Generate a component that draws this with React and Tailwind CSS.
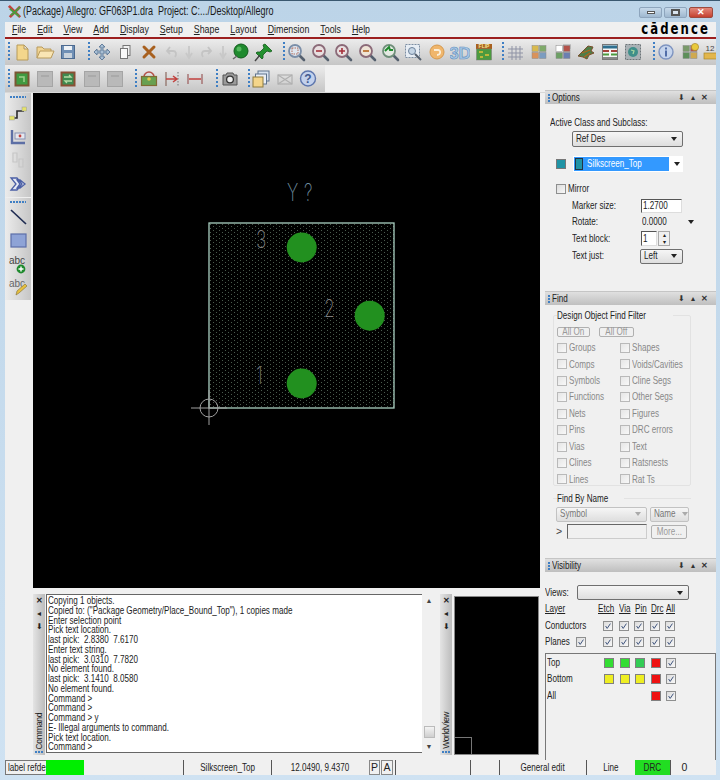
const font = { fontFamily: '"Liberation Sans", Arial, sans-serif' }

// the screenshot is squeezed sideways, so labels get narrowed the same way
function T({ children, center = false, className = '' }) {
  return (
    <span className={`inline-block whitespace-nowrap scale-x-[0.77] ${center ? 'origin-center' : 'origin-left'} ${className}`}>
      {children}
    </span>
  )
}

const Mag = ({ fill = '#e8dfe0', ring = '#8c7c86', children }) => (
  <>
    <path d="M13 13l5 5" stroke="#55606e" strokeWidth="2.6" strokeLinecap="round" />
    <circle cx="9" cy="9" r="6" fill={fill} stroke={ring} strokeWidth="1.8" />
    {children}
  </>
)

const Tiles = ({ colors }) => (
  <>
    {colors.map((c, i) => (
      <rect key={i} x={3 + (i % 2) * 7.5} y={3.5 + Math.floor(i / 2) * 7} width="6.5" height="6" fill={c} stroke="#8a8a8a" strokeWidth="0.5" />
    ))}
  </>
)

const icons = {
  file: <path d="M5 3h7l4 4v11H5z M12 3v4h4" fill="#f3d68c" stroke="#b79a58" />,
  open: (
    <>
      <path d="M2 16V5h5l2 2h7v3" fill="#f1d493" stroke="#b89a5c" />
      <path d="M2 16l3-7h14l-3 7z" fill="#f9e5b4" stroke="#b89a5c" />
    </>
  ),
  save: (
    <>
      <rect x="3.5" y="3.5" width="13" height="13" fill="#6f8fb5" stroke="#4c6a90" />
      <rect x="6" y="4" width="8" height="4" fill="#eef2f6" />
      <rect x="6" y="11" width="8" height="5" fill="#c8d2dc" />
    </>
  ),
  move: <path d="M10 2l3 3h-2v4h4V7l3 3-3 3v-2h-4v4h2l-3 3-3-3h2v-4H5v2l-3-3 3-3v2h4V5H7z" fill="#a9bfd4" stroke="#5a7696" strokeWidth="0.9" />,
  copy: (
    <>
      <rect x="8" y="3.5" width="7" height="10" fill="#f1f1f1" stroke="#777" />
      <rect x="5.5" y="6.5" width="7" height="10" fill="#fafafa" stroke="#777" />
    </>
  ),
  del: <path d="M5 5l10 10M15 5L5 15" stroke="#a8601f" strokeWidth="3" strokeLinecap="round" />,
  undo: <path d="M8 5L5 9l3 3M5 9h6c3 0 4 3 2 6" fill="none" stroke="#c4c4c4" strokeWidth="1.8" />,
  redo: <path d="M12 5l3 4-3 3M15 9H9c-3 0-4 3-2 6" fill="none" stroke="#c4c4c4" strokeWidth="1.8" />,
  down: <path d="M10 4v10M7 11l3 5 3-5" fill="none" stroke="#c8c8c8" strokeWidth="1.8" />,
  ball: (
    <>
      <circle cx="11" cy="9" r="7" fill="#1f8a2e" stroke="#125c1c" />
      <path d="M3 17l4-3" stroke="#666" strokeWidth="1.5" />
      <circle cx="9" cy="7" r="2.5" fill="#56b85e" />
    </>
  ),
  pin: (
    <>
      <path d="M12 2l7 7-2 1-3-1-4 4 0 3-1 1-6-6 1-1 3 0 4-4-1-3z" fill="#23912f" stroke="#135c1b" strokeWidth="0.8" />
      <path d="M7 13l-5 6" stroke="#444" strokeWidth="1.4" />
    </>
  ),
  zoomArea: <Mag fill="#dfe6ef" ring="#7b8ea8"><rect x="6" y="6" width="6" height="6" fill="none" stroke="#b06f5e" strokeDasharray="1.5 1" /></Mag>,
  zoomOut: <Mag ring="#8b6a78"><path d="M6 9h6" stroke="#a5303a" strokeWidth="1.6" /></Mag>,
  zoomIn: <Mag ring="#8b6a78"><path d="M6 9h6M9 6v6" stroke="#a5303a" strokeWidth="1.6" /></Mag>,
  zoomMinus: <Mag fill="#efe4d6" ring="#8b6a78"><path d="M6 9h6" stroke="#b5651d" strokeWidth="1.6" /></Mag>,
  zoomBack: <Mag fill="#e5eae3" ring="#6f8f7a"><path d="M5 9l4-4 1 3 3 0" fill="none" stroke="#1f8a2e" strokeWidth="2" /></Mag>,
  zoomFit: (
    <>
      <rect x="2.5" y="2.5" width="14" height="13" fill="#e7edf4" stroke="#7d8ea3" strokeDasharray="2 1" />
      <circle cx="9" cy="9" r="3.5" fill="#c5d5e5" stroke="#6d829b" />
      <path d="M12 12l6 6" stroke="#55606e" strokeWidth="2" />
    </>
  ),
  refresh: (
    <>
      <circle cx="10" cy="10" r="7" fill="#f0b66c" stroke="#d5994f" />
      <path d="M7 8h4c3 0 3 5-1 5" fill="none" stroke="#fbeed8" strokeWidth="1.8" />
    </>
  ),
  three: (
    <text x="10" y="16.5" textAnchor="middle" fontSize="17" fontWeight="700" fill="#a9c8e6" stroke="#5e8ebd" strokeWidth="0.6" style={font}>3D</text>
  ),
  flip: (
    <>
      <rect x="2" y="2" width="16" height="5" fill="#a8601f" />
      <text x="10" y="6.4" textAnchor="middle" fontSize="5" fontWeight="700" fill="#f6e39a" style={font}>FLIP</text>
      <rect x="2.5" y="7" width="15" height="11" fill="#4c9a3f" stroke="#777" strokeWidth="0.5" />
      <path d="M5 10h4M11 13h4M6 15h3" stroke="#e2c23c" strokeWidth="1.4" />
    </>
  ),
  grid: <path d="M6 4v14M10 4v14M14 4v14M2 7h15M2 11h15M2 15h15" stroke="#8f93a5" strokeWidth="1" />,
  colors: <Tiles colors={['#d8b94e', '#7faa6a', '#d9925a', '#7b9cc0']} />,
  layers: (
    <>
      <rect x="10" y="2" width="8" height="5" fill="#c4c4c4" />
      <rect x="10" y="8" width="8" height="4" fill="#d4d4d4" />
      <Tiles colors={['#fff', '#b5524a', '#6c9f64', '#6b7fb0']} />
    </>
  ),
  dragon: (
    <>
      <path d="M2 14l6-6 4-4 5 1-2 4 3 2-5 2-2 4-4-2z" fill="#4f7d48" stroke="#7a4f2c" />
      <path d="M6 11l8-3M8 15l6-4" stroke="#b5651d" strokeWidth="1.1" />
    </>
  ),
  ecset: (
    <>
      <rect x="2.5" y="2.5" width="15" height="15" fill="#f4f4f4" stroke="#777" />
      <path d="M3 5h14" stroke="#2e6f8f" strokeWidth="3" />
      <path d="M3 9h6M11 9h6" stroke="#a5403a" strokeWidth="2" />
      <path d="M3 12.5h6M11 12.5h6" stroke="#4c9a3f" strokeWidth="2" />
      <path d="M3 16h14" stroke="#888" strokeWidth="2" />
    </>
  ),
  globe: (
    <>
      <rect x="2.5" y="2.5" width="15" height="15" fill="#a9b1b5" stroke="#6d7478" strokeDasharray="2 1" />
      <circle cx="10" cy="10" r="5" fill="#3f8f8a" />
      <path d="M8 8l3 1-1 3" stroke="#a8d6a0" strokeWidth="1.3" fill="none" />
    </>
  ),
  info: (
    <>
      <circle cx="10" cy="10" r="7" fill="#c5d4ec" stroke="#7e94c0" strokeWidth="1.4" />
      <rect x="9" y="8.5" width="2" height="6" fill="#516da8" />
      <rect x="9" y="5.5" width="2" height="2" fill="#516da8" />
    </>
  ),
  status: (
    <>
      <Tiles colors={['#7a9a6a', '#b5524a', '#5d8f5a', '#d0a94f']} />
      <circle cx="15" cy="5" r="3.6" fill="#e9c93b" stroke="#a9882a" strokeWidth="0.7" />
    </>
  ),
  twelve: (
    <>
      <text x="9" y="8.5" textAnchor="middle" fontSize="8" fill="#444" style={font}>12</text>
      <rect x="3" y="11" width="14" height="6" fill="#e2b64c" stroke="#a9882a" strokeWidth="0.7" />
    </>
  ),
  brdOne: (
    <>
      <rect x="2.5" y="2.5" width="15" height="15" fill="#7a5632" />
      <rect x="4.5" y="4.5" width="11" height="11" fill="#3f9a40" />
      <path d="M7 8h5v5" fill="none" stroke="#9fd08a" strokeWidth="1.5" />
    </>
  ),
  brdTwo: (
    <>
      <rect x="2.5" y="2.5" width="15" height="15" fill="#8a4f34" />
      <rect x="4.5" y="4.5" width="11" height="11" fill="#3f8a50" />
      <path d="M6 8h7l-2-2M14 12H7l2 2" fill="none" stroke="#b7dca5" strokeWidth="1.3" />
    </>
  ),
  brdOff: (
    <>
      <rect x="2.5" y="2.5" width="15" height="15" fill="#b9b9b9" stroke="#a5a5a5" />
      <path d="M6 7h8" stroke="#9b9b9b" />
    </>
  ),
  place: (
    <>
      <path d="M5 8a5 5 0 0 1 10 0" fill="none" stroke="#b5524a" strokeWidth="1.6" />
      <rect x="2.5" y="7.5" width="15" height="9" fill="#68a050" stroke="#806c32" strokeWidth="1.2" />
      <circle cx="10" cy="10" r="1.8" fill="#e5c94f" />
    </>
  ),
  dimOne: (
    <>
      <path d="M4 3v14" stroke="#8b6a60" strokeWidth="1.2" />
      <path d="M16 3v14" stroke="#777" strokeDasharray="1.5 1.5" />
      <path d="M4 10h10M11 7l4 3-4 3" fill="none" stroke="#c2413e" strokeWidth="1.5" />
    </>
  ),
  dimTwo: (
    <>
      <path d="M3 5v10M17 5v10" stroke="#9b5b5b" strokeWidth="1.2" />
      <path d="M4 10h12" stroke="#c2413e" strokeWidth="1.5" />
    </>
  ),
  camera: (
    <>
      <path d="M3 6h3l1-2h6l1 2h3v10H3z" fill="#9a9a9a" stroke="#555" />
      <circle cx="10" cy="10.5" r="3.4" fill="#f0f0f0" stroke="#333" strokeWidth="1.3" />
    </>
  ),
  stack: (
    <>
      <rect x="7" y="2" width="11" height="10" fill="#d7e2ef" stroke="#60748e" />
      <rect x="4.5" y="5" width="11" height="10" fill="#eaeff5" stroke="#60748e" />
      <rect x="2" y="8" width="10" height="10" fill="#f4d58a" stroke="#8e7b3e" />
    </>
  ),
  mail: (
    <>
      <path d="M3 6l14 9M17 6L3 15" stroke="#b0b0b0" strokeWidth="1.2" />
      <rect x="3" y="6" width="14" height="9" fill="none" stroke="#b0b0b0" strokeWidth="1.2" />
    </>
  ),
  help: (
    <>
      <circle cx="10" cy="9.5" r="7.5" fill="#c3d1ec" stroke="#5e76ad" strokeWidth="1.4" />
      <text x="10" y="14" textAnchor="middle" fontSize="12" fontWeight="700" fill="#41598f" style={font}>?</text>
    </>
  ),
  route: (
    <>
      <path d="M4 15h5V8h7" fill="none" stroke="#2b2b2b" strokeWidth="1.6" />
      <rect x="1.5" y="13" width="5" height="4" fill="#e4e26a" stroke="#999" strokeWidth="0.5" />
      <rect x="14" y="4" width="4.5" height="4" fill="#e4e26a" stroke="#999" strokeWidth="0.5" />
    </>
  ),
  sect: (
    <>
      <path d="M4 3v13h13" fill="none" stroke="#5d6fa5" strokeWidth="2.4" />
      <rect x="7" y="6" width="10" height="6" fill="#e5e7ee" stroke="#8791b3" />
      <circle cx="12" cy="9" r="1.4" fill="#c2413e" />
    </>
  ),
  ghost: <path d="M5 3h4v9H5zM11 9h4v8h-4z" fill="none" stroke="#c6c6c6" strokeWidth="1.2" />,
  fan: <path d="M3 4h6l5 6-5 6H3l5-6z M9 6h3l5 4-5 4H9l3-4z" fill="#e6e9f4" stroke="#4b5fa5" strokeWidth="1.3" />,
  line: <path d="M3 3l15 14" stroke="#1f2c52" strokeWidth="1.7" />,
  shape: <rect x="3" y="4" width="15" height="13" fill="#8ea3d6" stroke="#5c6fa8" strokeWidth="1.2" />,
  abcAdd: (
    <>
      <text x="1" y="10" fontSize="10" fill="#444" style={font}>abc</text>
      <circle cx="13" cy="15" r="4.4" fill="#1f8a2e" />
      <path d="M10.5 15h5M13 12.5v5" stroke="#fff" strokeWidth="1.4" />
    </>
  ),
  abcEdit: (
    <>
      <text x="1" y="10" fontSize="10" fill="#666" style={font}>abc</text>
      <path d="M8 18l1-4 8-7 2 2-8 7z" fill="#e7c03e" stroke="#8e7b3e" strokeWidth="0.7" />
    </>
  ),
}

function Icon({ name }) {
  return (
    <svg viewBox="0 0 20 20" className="h-[20px] w-[20px] shrink-0">
      {icons[name]}
    </svg>
  )
}

function VHandle() {
  return <div className="ml-[3px] h-[20px] w-[2px] shrink-0 bg-[repeating-linear-gradient(#3f7fc4_0_2px,transparent_2px_4px)]" />
}

function ToolGroup({ names, w = 'w-[23.4px]' }) {
  return (
    <div className="flex items-center">
      {names.map((n, i) => (
        <div key={i} className={`flex ${w} shrink-0 justify-center`}>
          <Icon name={n} />
        </div>
      ))}
    </div>
  )
}

function PanelHeader({ title }) {
  return (
    <div className="flex h-[14px] items-center border-t border-[#c5c5c5] bg-gradient-to-b from-[#e0e0e0] to-[#bfbfbf] pl-[3px] pr-[8px] text-[#222]">
      <span className="mr-[2px] h-[8px] w-[2px] bg-[repeating-linear-gradient(#3f7fc4_0_2px,transparent_2px_3px)]" />
      <T>{title}</T>
      <span className="ml-auto flex items-center gap-[6px] text-[8px] leading-none text-[#333]">
        <span>⬇</span>
        <span>▴</span>
        <span className="font-bold">✕</span>
      </span>
    </div>
  )
}

function Combo({ className = '', label = '', disabled = false }) {
  return (
    <div
      className={`flex items-center justify-between overflow-hidden rounded-[2px] border bg-gradient-to-b from-[#f6f6f6] to-[#dedede] pl-[3px] pr-[5px] ${
        disabled ? 'border-[#c2c2c2] text-[#777]' : 'border-[#6f6f6f] text-[#222]'
      } ${className}`}
    >
      <T>{label}</T>
      <span className={`h-0 w-0 shrink-0 border-x-[3.5px] border-t-[4px] border-x-transparent ${disabled ? 'border-t-[#aaa]' : 'border-t-[#222]'}`} />
    </div>
  )
}

function Check({ on = false, dim = false }) {
  return (
    <span
      className={`flex h-[10px] w-[10px] shrink-0 items-center justify-center border bg-gradient-to-br ${
        dim ? 'border-[#b9b9b9] from-[#e6e6e6] to-[#f8f8f8]' : 'border-[#8e8f8f] from-[#dcdcdc] to-[#f8f8f8]'
      }`}
    >
      {on && (
        <svg viewBox="0 0 10 10" className="h-[8px] w-[8px]">
          <path d="M2 5l2 3 4-6" fill="none" stroke="#3a4f7a" strokeWidth="1.2" />
        </svg>
      )}
    </span>
  )
}

function Swatch({ color }) {
  return <span className="h-[10px] w-[10px] shrink-0 border border-[#808080]" style={{ backgroundColor: color }} />
}

function OptionsPanel() {
  return (
    <section className="h-[197px] shrink-0 overflow-hidden">
      <PanelHeader title="Options" />
      <div className="px-[5px]">
        <p className="mt-[12px] h-[12px] leading-[12px]"><T>Active Class and Subclass:</T></p>
        <Combo label="Ref Des" className="ml-[22px] mt-[3px] h-[16px] w-[111px]" />
        <div className="mt-[9px] flex items-center">
          <span className="ml-[6px] h-[10px] w-[10px] border border-[#777] bg-[#1f93a5]" />
          <div className="ml-[7px] flex h-[16px] w-[110px] items-center bg-white p-[1px]">
            <div className="flex h-[14px] w-[95px] items-center bg-[#3399ff] text-white">
              <span className="ml-[1px] mr-[4px] h-[12px] w-[8px] border border-[#234] bg-[#1f93a5]" />
              <T>Silkscreen_Top</T>
            </div>
            <span className="ml-[5px] h-0 w-0 border-x-[3.5px] border-t-[4px] border-x-transparent border-t-[#222]" />
          </div>
        </div>
        <div className="mt-[9px] flex items-center gap-[2px] pl-[6px]">
          <Check />
          <T>Mirror</T>
        </div>
        <div className="mt-[2px] flex h-[14px] items-center pl-[22px]">
          <span className="w-[69px]"><T>Marker size:</T></span>
          <span className="flex h-[14px] w-[41px] items-center border border-[#ddd] border-l-[#555] border-t-[#555] bg-white pl-[1px]"><T>1.2700</T></span>
        </div>
        <div className="mt-[2px] flex h-[14px] items-center pl-[22px]">
          <span className="w-[69px]"><T>Rotate:</T></span>
          <span className="flex w-[54px] items-center justify-between pl-[1px] pr-[1px]">
            <T>0.0000</T>
            <span className="h-0 w-0 border-x-[3.5px] border-t-[4px] border-x-transparent border-t-[#222]" />
          </span>
        </div>
        <div className="mt-[2px] flex h-[16px] items-center pl-[22px]">
          <span className="w-[69px]"><T>Text block:</T></span>
          <span className="flex h-[15px] w-[16px] items-center border border-[#ddd] border-l-[#555] border-t-[#555] bg-white pl-[1px]"><T>1</T></span>
          <span className="ml-[1px] flex h-[15px] w-[12px] flex-col border border-[#aaa] text-center text-[6px] leading-[6.5px]">
            <span>▴</span>
            <span>▾</span>
          </span>
        </div>
        <div className="mt-[2px] flex h-[15px] items-center pl-[22px]">
          <span className="w-[68px]"><T>Text just:</T></span>
          <Combo label="Left" className="h-[15px] w-[43px]" />
        </div>
      </div>
    </section>
  )
}

const findItems = [
  ['Groups', 'Shapes'],
  ['Comps', 'Voids/Cavities'],
  ['Symbols', 'Cline Segs'],
  ['Functions', 'Other Segs'],
  ['Nets', 'Figures'],
  ['Pins', 'DRC errors'],
  ['Vias', 'Text'],
  ['Clines', 'Ratsnests'],
  ['Lines', 'Rat Ts'],
]

function FindPanel() {
  return (
    <section className="mt-[4px] h-[263px] shrink-0">
      <PanelHeader title="Find" />
      <fieldset className="mx-[8px] mt-[3px] h-[178px] w-[138px] min-w-0 rounded-[2px] border border-[#e2e2e2] pl-[3px] pt-[3px]">
        <legend className="ml-0 text-[#222]"><T>Design Object Find Filter</T></legend>
        <div className="flex gap-[9px]">
          <span className="flex h-[10px] w-[33px] items-center justify-center rounded-[2px] border border-[#b0b0b0] text-[#999]"><T center>All On</T></span>
          <span className="flex h-[10px] w-[35px] items-center justify-center rounded-[2px] border border-[#b0b0b0] text-[#999]"><T center>All Off</T></span>
        </div>
        <div className="mt-[3px] grid grid-cols-[63px_1fr] text-[#888]">
          {findItems.flat().map((label) => (
            <div key={label} className="flex h-[16.45px] items-center gap-[2px]">
              <Check dim />
              <T>{label}</T>
            </div>
          ))}
        </div>
      </fieldset>
      <fieldset className="mx-[8px] mt-[5px] h-[47px] w-[138px] min-w-0 border-t border-[#e2e2e2]">
        <legend className="ml-[4px] text-[#222]"><T>Find By Name</T></legend>
        <div className="ml-[3px] flex gap-[3px]">
          <Combo label="Symbol" disabled className="h-[15px] w-[91px]" />
          <Combo label="Name" disabled className="h-[15px] w-[39px]" />
        </div>
        <div className="ml-[3px] mt-[2px] flex items-center text-[#444]">
          <span className="w-[11px]">&gt;</span>
          <span className="h-[15px] w-[80px] border border-[#ccc] border-l-[#666] border-t-[#666] bg-[#f0f0f0]" />
          <span className="ml-[4px] flex h-[14px] w-[36px] items-center justify-center rounded-[2px] border border-[#b0b0b0] text-[#999]"><T center>More...</T></span>
        </div>
      </fieldset>
    </section>
  )
}

const layerRows = [
  { name: 'Top', colors: ['#33dd33', '#33dd33', '#33cc55', '#ee1111'] },
  { name: 'Bottom', colors: ['#eeee22', '#eeee22', '#eeee22', '#ee1111'] },
  { name: 'All', colors: [null, null, null, '#ee1111'] },
]

const colsClass = 'grid grid-cols-[10px_10px_10px_10px_10px] gap-x-[5.6px]'

function VisibilityPanel() {
  return (
    <section className="mt-[4px] flex min-h-0 flex-1 flex-col">
      <PanelHeader title="Visibility" />
      <div className="flex items-center pt-[13px]">
        <span className="w-[32px]"><T>Views:</T></span>
        <Combo className="h-[15px] w-[112px]" />
      </div>
      <div className="mt-[2px] flex h-[12px] items-center">
        <span className="w-[53px]"><T className="underline">Layer</T></span>
        <span className="w-[21px]"><T className="underline">Etch</T></span>
        <span className="w-[16px]"><T className="underline">Via</T></span>
        <span className="w-[16px]"><T className="underline">Pin</T></span>
        <span className="w-[15px]"><T className="underline">Drc</T></span>
        <T className="underline">All</T>
      </div>
      <div className="mt-[5px] flex h-[12px] items-center">
        <span className="w-[58px]"><T>Conductors</T></span>
        <div className={colsClass}>
          {[0, 1, 2, 3, 4].map((i) => <Check key={i} on />)}
        </div>
      </div>
      <div className="mt-[4px] flex h-[12px] items-center">
        <span className="w-[31px]"><T>Planes</T></span>
        <Check on />
        <div className={`ml-[17px] ${colsClass}`}>
          {[0, 1, 2, 3, 4].map((i) => <Check key={i} on />)}
        </div>
      </div>
      <div className="mt-[5px] min-h-0 flex-1 border-x border-t border-[#777] pl-[1px] pt-[3px]">
        {layerRows.map((row) => (
          <div key={row.name} className="mb-[4.5px] flex h-[12px] items-center">
            <span className="w-[57px]"><T>{row.name}</T></span>
            <div className={colsClass}>
              {row.colors.map((c, i) => (c ? <Swatch key={i} color={c} /> : <span key={i} />))}
              <Check on />
            </div>
          </div>
        ))}
      </div>
    </section>
  )
}

function Canvas() {
  return (
    <svg viewBox="33 93 507 495" className="h-[495px] w-[507px] shrink-0 bg-black">
      <defs>
        <pattern id="dots" x="209" y="223" width="6" height="4" patternUnits="userSpaceOnUse">
          <rect x="1" y="1" width="1" height="1" fill="#4a5a4d" />
          <rect x="4" y="3" width="1" height="1" fill="#4a5a4d" />
        </pattern>
      </defs>
      <rect x="209" y="223" width="185" height="185" fill="url(#dots)" stroke="#a9cfc0" strokeWidth="1.3" />
      <g fontSize="24" fill="#6d8a9c" fontWeight="200" style={{ fontFamily: 'Inter, sans-serif' }}>
        <text transform="translate(287 201) scale(0.72 1)">Y</text>
        <text transform="translate(304 201) scale(0.72 1)">?</text>
      </g>
      <g fontSize="24" fill="#7d7d7d" fontWeight="200" style={{ fontFamily: 'Inter, sans-serif' }}>
        <text transform="translate(256 248) scale(0.72 1)">3</text>
        <text transform="translate(324 317) scale(0.72 1)">2</text>
        <text transform="translate(256 384) scale(0.72 1)">1</text>
      </g>
      <circle cx="301.7" cy="247.5" r="15" fill="#22901f" />
      <circle cx="369.7" cy="315.7" r="15" fill="#22901f" />
      <circle cx="301.7" cy="383.5" r="15" fill="#22901f" />
      <circle cx="209" cy="408" r="9" fill="none" stroke="#a0a0a0" />
      <path d="M191 408h36M209 390v35" stroke="#a0a0a0" />
    </svg>
  )
}

function TabStrip({ label }) {
  return (
    <div className="flex h-[161px] w-[12px] shrink-0 flex-col items-center justify-between bg-gradient-to-r from-[#e4e4e4] to-[#bcbcbc] py-[2px] leading-none text-[#222]">
      <div className="flex flex-col items-center gap-[5px] pt-[1px] text-[8px]">
        <span className="font-bold">✕</span>
        <span>◂</span>
        <span>⬇</span>
      </div>
      <div className="flex flex-col items-center gap-[2px]">
        <span className="rotate-180 text-[8.5px] tracking-[-0.4px] [writing-mode:vertical-rl]">{label}</span>
        <span className="h-[2px] w-[8px] bg-[repeating-linear-gradient(90deg,#3f7fc4_0_2px,transparent_2px_3px)]" />
      </div>
    </div>
  )
}

const commandLines = [
  'Copying 1 objects.',
  'Copied to: ("Package Geometry/Place_Bound_Top"), 1 copies made',
  'Enter selection point',
  'Pick text location.',
  'last pick:  2.8380  7.6170',
  'Enter text string.',
  'last pick:  3.0310  7.7820',
  'No element found.',
  'last pick:  3.1410  8.0580',
  'No element found.',
  'Command >',
  'Command >',
  'Command > y',
  'E- Illegal arguments to command.',
  'Pick text location.',
  'Command >',
]

function CommandPanel() {
  return (
    <div className="mt-[6px] flex h-[162px] items-stretch">
      <TabStrip label="Command" />
      <div className="ml-[1px] h-[159px] w-[376px] overflow-hidden border-y border-l border-[#666] bg-white pl-[1px] pt-[1px] leading-[9.75px] text-[#222]">
        {commandLines.map((l, i) => (
          <div key={i} className="whitespace-pre"><T className="whitespace-pre">{l}</T></div>
        ))}
      </div>
      <div className="flex h-[159px] w-[14px] flex-col items-center justify-between bg-[#f0f0f0] py-[3px] text-[7px] leading-none text-[#444]">
        <span>▲</span>
        <div className="flex flex-col items-center gap-[5px]">
          <span className="h-[12px] w-[11px] border border-[#bbb] bg-gradient-to-b from-[#f4f4f4] to-[#cfcfcf]" />
          <span>▼</span>
        </div>
      </div>
      <div className="w-[4px]" />
      <TabStrip label="WorldView" />
      <div className="ml-[2px] mt-[2px] flex h-[159px] w-[85px] items-end border border-[#888] bg-black">
        <span className="h-[17px] w-[17px] border-r border-t border-[#777]" />
      </div>
    </div>
  )
}

const statusCell = 'flex h-[15px] shrink-0 items-center border-l border-[#555]'

function StatusBar() {
  return (
    <footer className="flex h-[15px] items-center bg-[#f0f0f0] leading-none text-[#222]">
      <span className={`${statusCell} w-[41px] border-y border-[#777] pl-[2px]`}><T>label refde</T></span>
      <span className="h-[15px] w-[38px] shrink-0 bg-[#00ee00]" />
      <span className={`${statusCell} w-[100px] border-l-0 border-r`} />
      <span className={`${statusCell} w-[88px] justify-center border-l-0 border-r`}><T center>Silkscreen_Top</T></span>
      <span className={`${statusCell} w-[96px] justify-center border-l-0`}><T center>12.0490, 9.4370</T></span>
      <span className={`${statusCell} ml-[1px] w-[11px] justify-center border border-[#888]`}>P</span>
      <span className={`${statusCell} ml-[1px] w-[12px] justify-center border border-[#888]`}>A</span>
      <span className={`${statusCell} ml-[2px] w-[75px]`} />
      <span className={`${statusCell} w-[29px]`} />
      <span className={`${statusCell} w-[87px] justify-center`}><T center>General edit</T></span>
      <span className={`${statusCell} w-[49px] justify-center`}><T center>Line</T></span>
      <span className="flex h-[15px] w-[35px] shrink-0 items-center justify-center bg-[#22dd22]"><T center>DRC</T></span>
      <span className={`${statusCell} w-[28px] justify-center`}>0</span>
    </footer>
  )
}

function TitleButton({ className, children }) {
  return (
    <span className={`flex h-[11px] items-center justify-center rounded-[2px] border border-[#8ea5bd] text-white ${className}`}>
      {children}
    </span>
  )
}

export default function App() {
  return (
    <div style={font} className="flex h-[780px] w-[720px] flex-col overflow-hidden bg-gradient-to-b from-[#bcd4e8] to-[#cfe2f2] text-[10.5px] text-[#222]">
      {/* title bar */}
      <header className="flex h-[22px] shrink-0 items-end border-t border-[#3a5870] pb-[2px] pl-[7px] pr-[7px] text-[#1a1a1a]">
        <svg viewBox="0 0 16 16" className="mb-[1px] h-[15px] w-[15px] shrink-0">
          <path d="M2 2l12 12M14 3L3 14" stroke="#c2413e" strokeWidth="3" />
          <path d="M3 5l5 4 6-6M4 12l4-3 5 4" stroke="#4c9a3f" strokeWidth="2" fill="none" />
        </svg>
        <span className="ml-[1px] inline-block origin-left scale-x-[0.75] whitespace-pre text-[12px]">(Package) Allegro: GF063P1.dra  Project: C:.../Desktop/Allegro</span>
        <div className="ml-auto mb-[2px] flex items-center gap-[2px]">
          <TitleButton className="w-[23px] bg-gradient-to-b from-[#c7d9ea] to-[#9fb8d0]"><span className="h-[3px] w-[8px] border border-[#555] bg-white" /></TitleButton>
          <TitleButton className="w-[23px] bg-gradient-to-b from-[#c7d9ea] to-[#9fb8d0]"><span className="h-[7px] w-[9px] border-2 border-[#555] bg-white/50" /></TitleButton>
          <TitleButton className="w-[24px] border-[#9c4a3e] bg-gradient-to-b from-[#e2877a] to-[#c5402e] text-[9px] font-bold">✕</TitleButton>
        </div>
      </header>

      <div className="flex h-[753px] min-h-0 flex-col pl-[5px] pr-[4px]">
        {/* menu */}
        <nav className="flex h-[17px] shrink-0 items-center justify-between border-b-2 border-[#9c1f1f] bg-[#f0f0f0] pl-[7px] pr-[6px] text-[#222]">
          <div className="flex origin-left scale-x-[0.8] gap-[13.75px] text-[11px]">
            {['File', 'Edit', 'View', 'Add', 'Display', 'Setup', 'Shape', 'Layout', 'Dimension', 'Tools', 'Help'].map((m) => (
              <span key={m}>
                <span className="underline">{m[0]}</span>
                {m.slice(1)}
              </span>
            ))}
          </div>
          <span className="origin-right scale-x-[0.78] text-[15px] leading-none tracking-[2.6px] text-black" style={{ fontFamily: '"DejaVu Sans", sans-serif', fontWeight: 700 }}>cādence</span>
        </nav>

        {/* toolbars */}
        <div className="flex h-[26px] shrink-0 items-center overflow-hidden bg-gradient-to-b from-[#ececec] to-[#c6c6c6]">
          <VHandle />
          <ToolGroup names={['file', 'open', 'save']} />
          <span className="w-[5px] shrink-0" />
          <VHandle />
          <ToolGroup names={['move', 'copy', 'del']} />
          <span className="w-[3px] shrink-0" />
          <ToolGroup names={['undo', 'down', 'redo', 'down', 'ball']} w="w-[17px]" />
          <span className="w-[3px] shrink-0" />
          <ToolGroup names={['pin']} />
          <span className="w-[5px] shrink-0" />
          <VHandle />
          <ToolGroup names={['zoomArea', 'zoomOut', 'zoomIn', 'zoomMinus', 'zoomBack', 'zoomFit', 'refresh', 'three', 'flip']} />
          <span className="w-[4px] shrink-0" />
          <VHandle />
          <ToolGroup names={['grid', 'colors', 'layers', 'dragon', 'ecset', 'globe']} />
          <span className="w-[5px] shrink-0" />
          <VHandle />
          <ToolGroup names={['info', 'status']} />
          <ToolGroup names={['twelve']} w="w-[20px]" />
        </div>
        <div className="flex h-[27px] shrink-0 bg-[#f0f0f0]">
          <div className="flex w-[320px] items-center bg-gradient-to-b from-[#ececec] to-[#c6c6c6]">
            <VHandle />
            <ToolGroup names={['brdOne', 'brdOff', 'brdTwo', 'brdOff', 'brdOff']} />
            <span className="w-[5px] shrink-0" />
            <VHandle />
            <ToolGroup names={['place', 'dimOne', 'dimTwo']} />
            <span className="w-[6px] shrink-0" />
            <VHandle />
            <ToolGroup names={['camera']} />
            <span className="w-[3px] shrink-0" />
            <VHandle />
            <ToolGroup names={['stack', 'mail', 'help']} />
          </div>
        </div>

        {/* body */}
        <div className="flex min-h-0 flex-1 border-t border-[#d8d8d8] bg-[#f0f0f0]">
          <aside className="h-[207px] w-[28px] shrink-0">
            <div className="h-[207px] w-[26px] bg-gradient-to-r from-[#ececec] to-[#c6c6c6]">
              <div className="flex h-[7px] items-center pl-[5px]"><span className="h-[2px] w-[16px] bg-[repeating-linear-gradient(90deg,#3f7fc4_0_2px,transparent_2px_3px)]" /></div>
              <div className="flex flex-col items-center gap-[3.5px] pt-[3px]">
                <Icon name="route" />
                <Icon name="sect" />
                <Icon name="ghost" />
                <Icon name="fan" />
              </div>
              <div className="mt-[3px] flex h-[7px] items-center border-t border-[#eee] pl-[5px] pt-[2px]"><span className="h-[2px] w-[16px] bg-[repeating-linear-gradient(90deg,#3f7fc4_0_2px,transparent_2px_3px)]" /></div>
              <div className="flex flex-col items-center gap-[3.5px] pt-[3px]">
                <Icon name="line" />
                <Icon name="shape" />
                <Icon name="abcAdd" />
                <Icon name="abcEdit" />
              </div>
            </div>
          </aside>

          <main className="flex w-[507px] shrink-0 flex-col">
            <Canvas />
            <CommandPanel />
          </main>

          <aside className="-mt-[3px] ml-[5px] flex w-[171px] shrink-0 flex-col">
            <OptionsPanel />
            <FindPanel />
            <VisibilityPanel />
          </aside>
        </div>

        <StatusBar />
      </div>
      <div className="h-[5px] shrink-0" />
    </div>
  )
}
